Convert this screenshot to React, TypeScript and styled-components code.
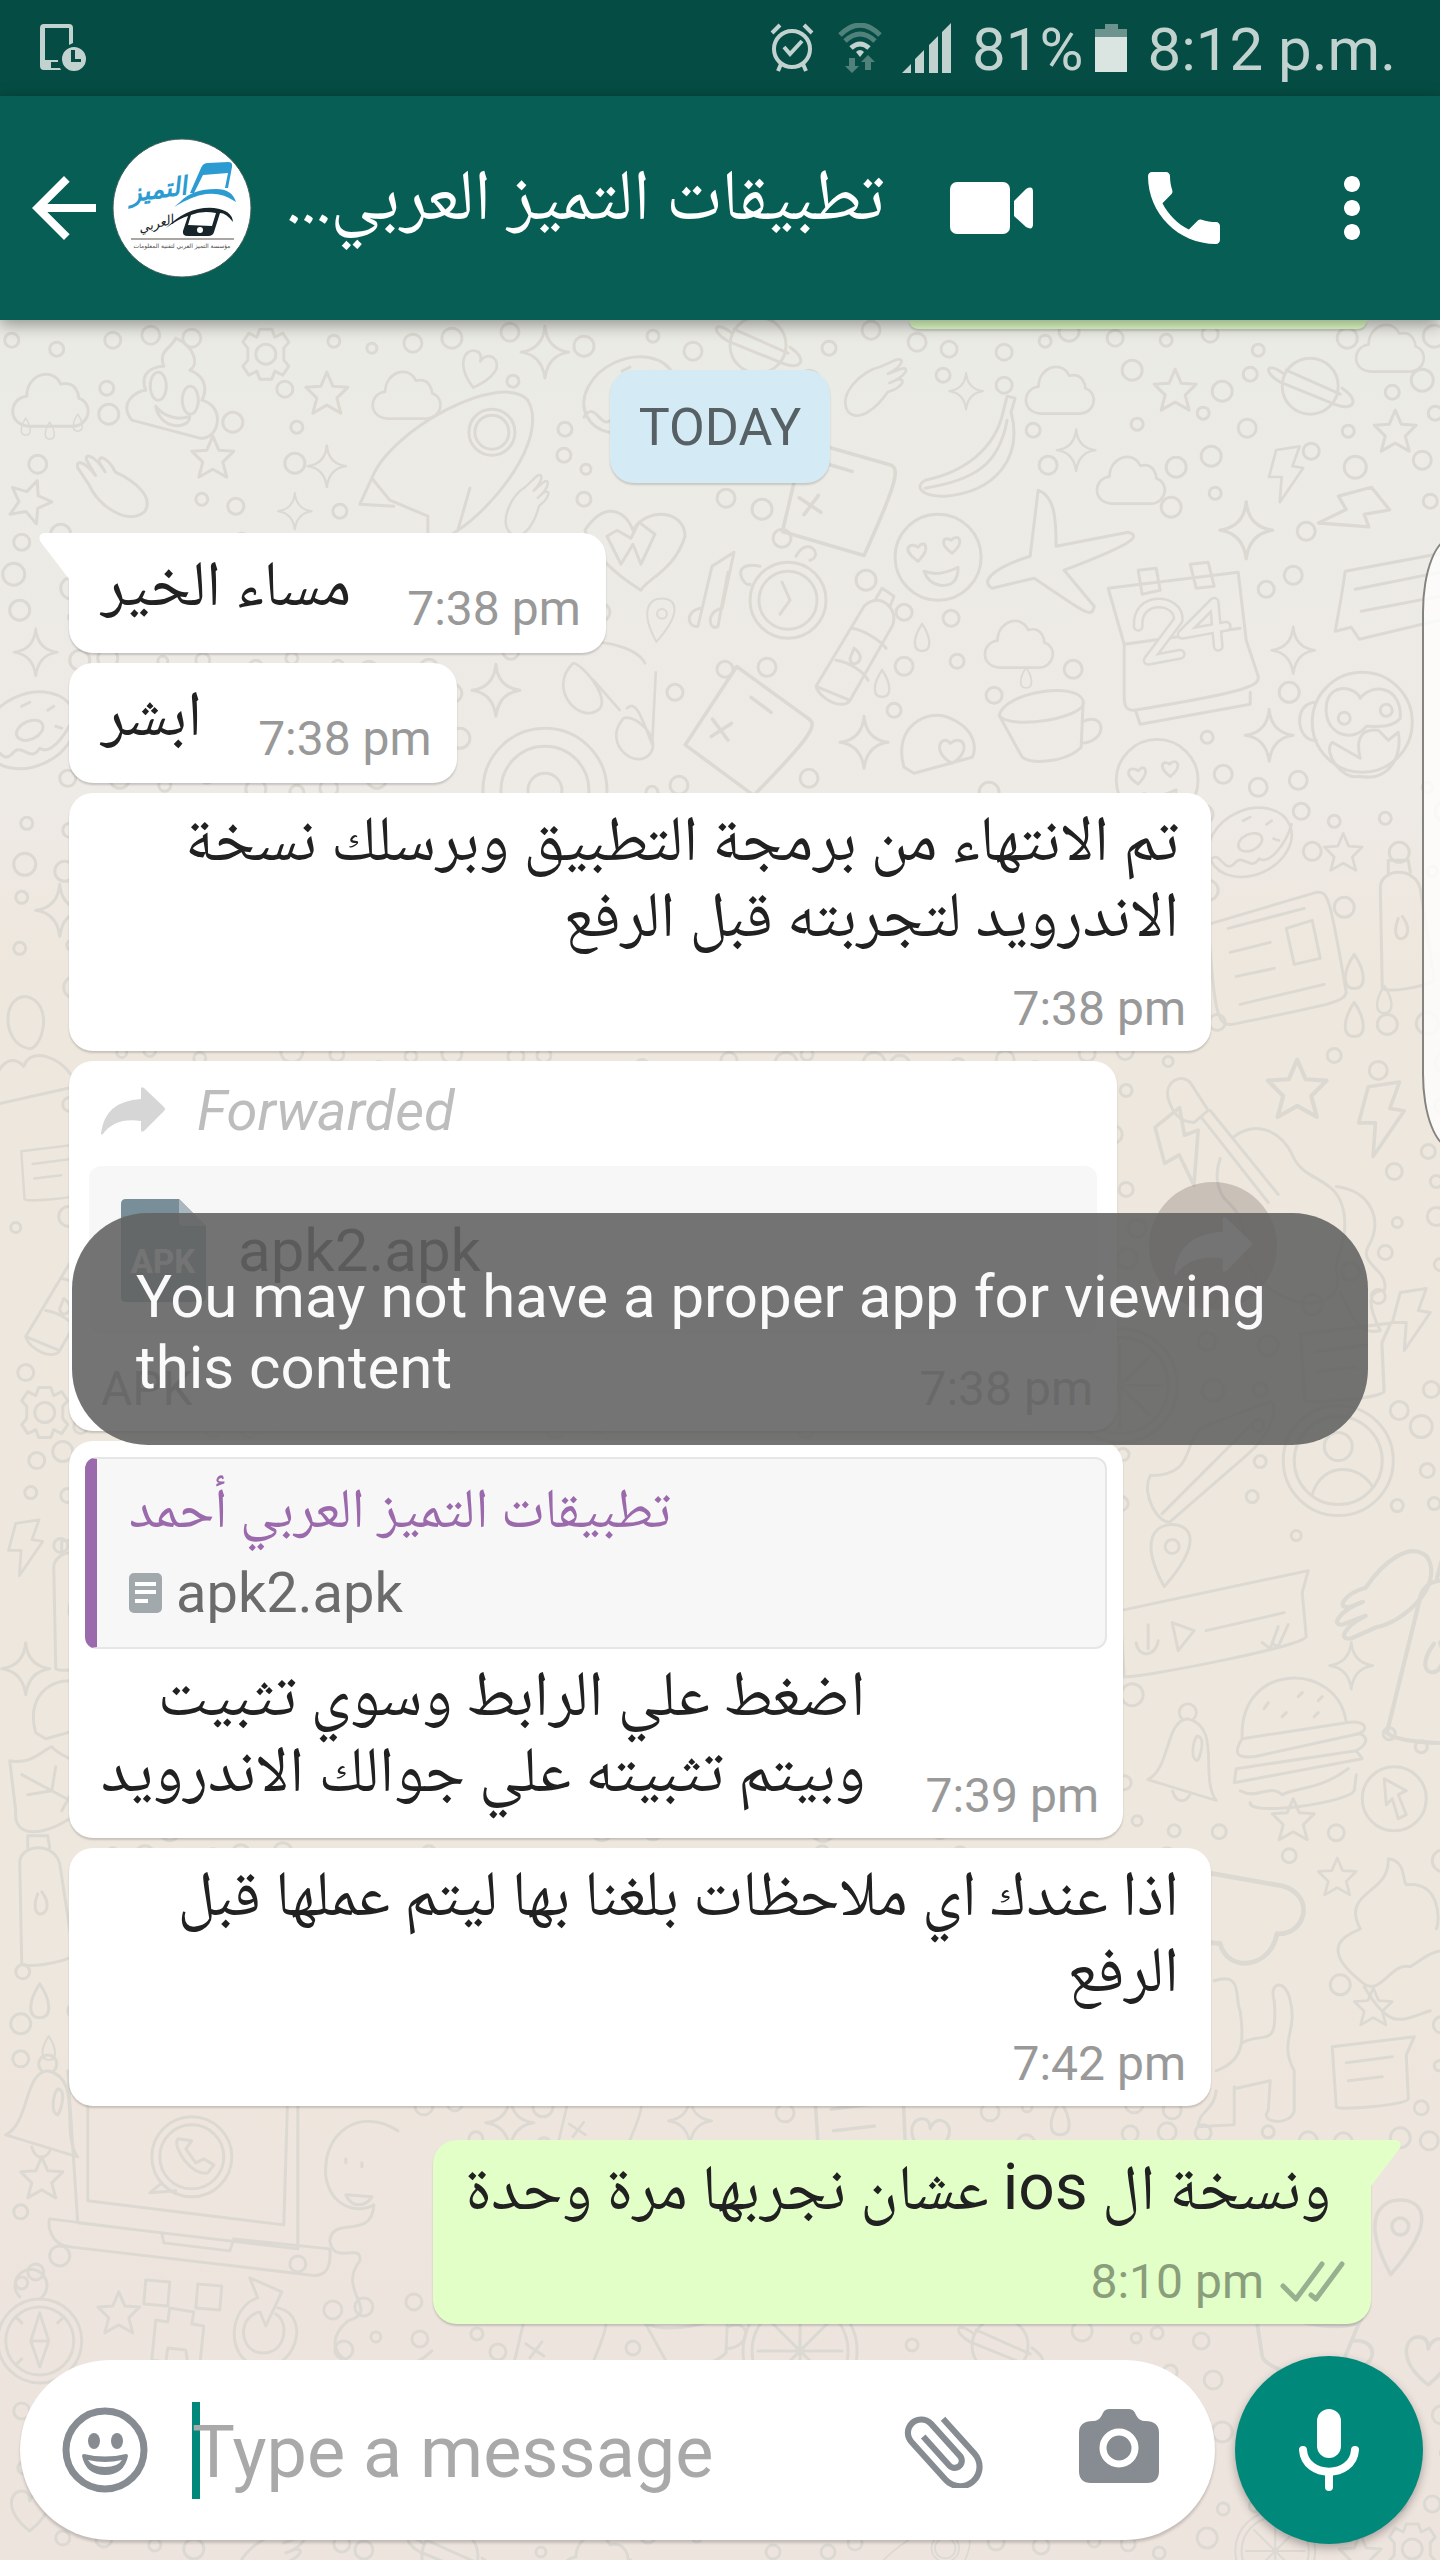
import React from 'react';
import styled, { createGlobalStyle } from 'styled-components';

const latin = `Roboto, "Noto Naskh Arabic", "DejaVu Sans", sans-serif`;
const arabic = `"Noto Naskh Arabic", "Noto Sans Arabic", "DejaVu Sans", sans-serif`;

const GlobalStyle = createGlobalStyle`
  * { box-sizing: border-box; }
  body { margin: 0; background: #eee7de; font-family: ${latin}; }
  button { border: 0; padding: 0; background: none; color: inherit; font: inherit; cursor: pointer; }
  svg { display: block; flex: none; }
  h1, p { margin: 0; font-weight: 400; }
`;

const Screen = styled.div`
  position: relative;
  display: flex;
  flex-direction: column;
  min-height: 100vh;
  overflow: hidden;
  isolation: isolate;
  background: linear-gradient(#ebebe5 14%, #eeeae6 31%, #eee7dd 38%, #eee7dd 78%, #eee4de 90%);
`;

const Wallpaper = styled.svg`
  position: absolute;
  inset: 0;
  width: 100%;
  height: 100%;
  z-index: -1;
  fill: none;
  stroke: #dcd9d3;
  stroke-width: 3;
  stroke-linecap: round;
  stroke-linejoin: round;
`;

const StatusBar = styled.div`
  display: flex;
  align-items: center;
  justify-content: space-between;
  height: 96px;
  padding: 0 44px 0 40px;
  background: #054d44;
  color: #c1d2cf;
  font-size: 60px;
  line-height: 72px;
`;

const StatusGroup = styled.div`
  display: flex;
  align-items: center;
  gap: 20px;
`;

const StatusText = styled.span`
  padding-top: 3px;
`;

const Charge = styled.span`
  display: flex;
  align-items: center;
  gap: 12px;
`;

const AppBar = styled.header`
  display: flex;
  align-items: center;
  height: 224px;
  padding: 0 40px 0 16px;
  background: #075e54;
  color: #fff;
  box-shadow: 0 4px 16px rgba(0, 0, 0, 0.4);
  z-index: 1;
`;

const Title = styled.h1`
  flex: 1;
  padding: 0 48px 8px 34px;
  font-family: ${arabic};
  font-size: 72px;
  line-height: 96px;
  white-space: nowrap;
  text-align: left;
`;

const BarActions = styled.div`
  display: flex;
  align-items: center;
  gap: 72px;
`;

const Chat = styled.main`
  flex: 1;
  display: flex;
  flex-direction: column;
  align-items: flex-start;
  gap: 10px;
  padding: 0 69px 32px;
`;

const PreviousBubble = styled.div`
  align-self: flex-end;
  width: 458px;
  height: 9px;
  margin: 0 4px 0 0;
  border-radius: 0 0 24px 24px;
  background: #e1ffc7;
  box-shadow: 0 2px 2px rgba(0, 0, 0, 0.15);
`;

const DayChip = styled.time`
  align-self: center;
  margin: 31px 0 40px;
  padding: 27px 29px 25px;
  border-radius: 24px;
  background: #d4eaf4;
  box-shadow: 0 2px 2px rgba(0, 0, 0, 0.15);
  color: #566065;
  font-size: 52px;
  line-height: 61px;
`;

const Bubble = styled.article<{ $wide?: boolean; $out?: boolean; $tail?: boolean }>`
  position: relative;
  display: flex;
  flex-direction: ${p => (p.$wide ? 'column' : 'row')};
  align-items: ${p => (p.$wide ? 'flex-end' : 'center')};
  gap: ${p => (p.$wide ? '20px' : '56px')};
  max-width: 1142px;
  min-height: 120px;
  padding: ${p => (p.$wide ? '16px 25px 14px 32px' : '14px 25px 16px 32px')};
  border-radius: 24px;
  background: ${p => (p.$out ? '#e1ffc7' : '#fff')};
  box-shadow: 0 2px 2px rgba(0, 0, 0, 0.17);
  align-self: ${p => (p.$out ? 'flex-end' : 'flex-start')};
  margin-top: ${p => (p.$out ? '24px' : '0')};
  ${p => p.$tail && !p.$out && 'border-top-left-radius: 0;'}
  ${p => p.$tail && p.$out && 'border-top-right-radius: 0;'}
`;

const Tail = styled.svg<{ $out?: boolean }>`
  position: absolute;
  top: 0;
  ${p => (p.$out ? 'left: 100%; fill: #e1ffc7;' : 'right: 100%; fill: #fff; transform: scaleX(-1);')}
`;

const Text = styled.p<{ $inset?: number }>`
  padding-right: ${p => p.$inset ?? 0}px;
  font-family: ${arabic};
  font-size: 64px;
  line-height: 76px;
  color: #212121;
`;

const Latin = styled.span`
  font-family: ${latin};
  line-height: 1;
`;

const Meta = styled.span<{ $out?: boolean }>`
  display: flex;
  align-items: center;
  align-self: flex-end;
  gap: 16px;
  color: ${p => (p.$out ? '#8a9e7c' : '#999')};
  font-size: 48px;
  line-height: 56px;
  white-space: nowrap;
`;

const FileBubble = styled(Bubble)`
  width: 1048px;
  max-width: 100%;
  flex-direction: column;
  align-items: stretch;
  gap: 0;
  padding: 22px 20px 14px;
`;

const Forwarded = styled.p`
  display: flex;
  align-items: center;
  gap: 32px;
  height: 56px;
  margin: 0 12px 27px;
  color: #bdbdbd;
  font-size: 56px;
  line-height: 56px;
  font-style: italic;
`;

const FileCard = styled.button`
  display: flex;
  align-items: center;
  gap: 32px;
  height: 168px;
  padding: 0 32px;
  border-radius: 12px;
  background: #f7f7f7;
  color: #212121;
  font-size: 60px;
`;

const FileFooter = styled.div`
  display: flex;
  justify-content: space-between;
  margin: 27px 4px 0 12px;
  color: #999;
  font-size: 48px;
  line-height: 56px;
`;

const ForwardButton = styled.button`
  position: absolute;
  top: 121px;
  left: calc(100% + 32px);
  width: 128px;
  height: 128px;
  display: grid;
  place-items: center;
  border-radius: 50%;
  background: rgba(90, 75, 70, 0.25);
  color: #fff;
`;

const ReplyBubble = styled(Bubble)`
  width: 1054px;
  max-width: 100%;
  flex-direction: column;
  align-items: stretch;
  padding: 16px 16px 14px;
  gap: 15px;
`;

const Quote = styled.blockquote`
  margin: 0;
  height: 192px;
  padding: 20px 32px 0;
  border: 2px solid #e6e6e6;
  border-left: 12px solid #9b6aac;
  border-radius: 12px;
  background: #f7f7f7;
`;

const QuoteName = styled.p`
  font-family: ${arabic};
  color: #9b6aac;
  font-size: 56px;
  line-height: 72px;
  text-align: left;
`;

const QuoteFile = styled.p`
  display: flex;
  align-items: center;
  gap: 14px;
  color: #6b6b6b;
  font-size: 56px;
  line-height: 84px;
`;

const ReplyBody = styled.div`
  display: flex;
  align-items: flex-end;
  justify-content: space-between;
  padding: 0 8px 0 16px;

  p { padding-bottom: 8px; white-space: nowrap; }
`;

const Toast = styled.div`
  position: absolute;
  left: 5%;
  right: 5%;
  bottom: 1116px;
  padding: 48px 64px 42px;
  border-radius: 76px;
  background: rgba(99, 99, 99, 0.89);
  color: #fafafa;
  font-size: 60px;
  line-height: 71px;
  z-index: 2;
`;

const EdgeHandle = styled.div`
  position: absolute;
  top: 537px;
  right: -42px;
  width: 60px;
  height: 612px;
  border: 2px solid #85837f;
  border-radius: 40px / 100px;
  background: rgba(255, 255, 255, 0.8);
`;

const Composer = styled.footer`
  display: flex;
  align-items: center;
  gap: 20px;
  padding: 0 17px 17px 20px;
`;

const Field = styled.div`
  flex: 1;
  min-width: 0;
  display: flex;
  align-items: center;
  height: 180px;
  padding: 0 56px 0 42px;
  border-radius: 90px;
  background: #fff;
  box-shadow: 0 3px 3px rgba(0, 0, 0, 0.18);
  color: #868c91;
`;

const Caret = styled.span`
  width: 8px;
  height: 97px;
  margin: 0 -8px 0 44px;
  background: #00887a;
`;

const MessageInput = styled.input`
  flex: 1;
  min-width: 0;
  height: 104px;
  padding: 4px 0 0;
  border: 0;
  outline: 0;
  background: none;
  font-family: ${latin};
  font-size: 72px;
  color: #212121;

  &::placeholder { color: #a9a9a9; opacity: 1; }
`;

const FieldActions = styled.div`
  display: flex;
  align-items: center;
  gap: 92px;
`;

const MicButton = styled.button`
  display: grid;
  place-items: center;
  width: 188px;
  height: 188px;
  border-radius: 50%;
  background: #00887a;
  color: #fff;
  box-shadow: 0 4px 10px rgba(0, 0, 0, 0.3);
`;

/* ---------- wallpaper doodles, each drawn around its own origin ---------- */

const doodles: Record<string, React.ReactNode> = {
  star: <path d="M0-22 6-8 21-7 10 4 14 19 0 11-14 19-10 4-21-7-6-8Z" />,
  sparkle: <path d="M0-26Q2-3 24 0 3 3 0 26-3 3-24 0-2-3 0-26Z" />,
  cloud: <path d="M-22 26C-44 24-42-2-24-4-24-26 2-34 10-16 26-20 28-4 28-2 44 4 38 26 22 26Z" />,
  drop: <path d="M0-18C12 0 12 16 0 16S-12 0 0-18Z" />,
  heart: <path d="M0 20C-26 0-20-20-8-20 0-20 0-12 0-10 2-16 8-22 16-16 26-6 12 10 0 20Z" />,
  bolt: <path d="M-10-28 16-32 8-10 20-8-6 30-4 2-18 2Z" />,
  gear: <g><circle r="10" /><path d="M-6-25H6L9-17 17-21 23-12 18-6V6L23 12 17 21 9 17 6 25H-6L-9 17-17 21-23 12-18 6V-6L-23-12-17-21-9-17Z" /></g>,
  face: <g><circle r="43" /><path d="M-20 4C-38-8-28-16-20-10-14-18-6-10-20 4ZM14-4C0-14 6-22 13-17 20-24 28-16 14-4ZM-14 14Q0 20 20 10 20 30 2 28-10 26-14 14Z" /></g>,
  planet: <g><circle r="28" /><path d="M-26-12C-44-26-48-14-30-4L24 18C44 26 50 14 32 2M-24-16 30 8" /></g>,
  banana: <path d="M42-62 50-60 46-46C58 0 30 34-20 38-46 38-50 28-40 22 0 14 30-10 38-46ZM42-38C34 6 10 22-40 30" />,
  hand: <path d="M-30 24C-42 4-14-22 6-26L24-34C34-36 30-26 14-18L30-24C38-26 36-16 16-8L26-12C36-12 28-2 14 2 2 20-18 36-30 24Z" />,
  pin: <g><circle cy="-12" r="7" /><path d="M-8 28C-34-20-16-34 0-34S34-20-8 28Z" /></g>,
  poop: <path d="M-40 20C-54 2-34-10-26-10-34-30-14-34-8-34-14-50 0-52 4-62 22-54 28-36 18-30 42-20 30 0 30 0 54 6 48 40 28 38ZM-16 6C-8 18 10 20 18 16 18 30-12 30-16 6ZM-14-28A8 14 0 1 0-13-28M18-14A8 14 0 1 0 19-14" />,
  donut: <g><ellipse rx="48" ry="36" transform="rotate(-25)" /><ellipse rx="14" ry="9" transform="rotate(-25)" /><path d="M-46 22C-34 4-30 36-18 24-8 10 0 34 10 18 22 26 40 0 46-20M-8-24 0-28M18-20 24-24M26-4 32-2" /></g>,
  ring: <g><circle r="62" /><circle r="44" /><circle r="17" /></g>,
  glasses: <path d="M-30-30C-60 0-20 40 0 20 10 6-20-30-30-30ZM24 34C4 60 40 90 56 70 70 50 30 20 24 34ZM-8-12 22 22M-36-50C-10-60 40-50 50-30M30 20C40 10 46 30 58 60L62-20" />,
  rocket: <g><circle cx="42" cy="-38" r="23" /><circle cx="42" cy="-38" r="17" /><path d="M-78 8C-60-40 50-100 78-70 100-30 40 40 8 60L-22 80-22 46-60 30ZM-78 8-90 34-56 36M8 60 20 18" /></g>,
  plane: <path d="M-10-76C6-70 8-50 8-20L80-34C94-30 84-22 16 4L46 40C44 54 34 44-14 12L-56 22C-70 14-50 0-18-10Z" />,
  calendar: <g><path d="M-66-42 64-58 72 10 84 46C86 56 70 62-40 80-48 80-50 76-50 66V14ZM-50 14 66-2M-38 82-34 94 76 74V62M-36-60-18-62-14-40-32-36ZM16-66 34-68 40-44 22-42Z" /><path d="M-36-4C-38-36 6-32 4-10L-26 30 6 24M44 16 40-28 8 4 52-4" strokeWidth="11" /><path d="M-36-4C-38-36 6-32 4-10L-26 30 6 24M44 16 40-28 8 4 52-4" strokeWidth="6" stroke="#ecebe5" /></g>,
  monkey: <g><circle r="50" /><path d="M-36-10C-38-42-6-36-2-24 10-40 40-36 38-4 30 6 14 4 4 4-8 20-34 14-36-10ZM-30 20C-40 30-20 58-4 54 30 60 40 30 36 10L26 18 16 8C-4 6-6 20-2 36ZM-46-20C-70-20-66 20-46 18" /><circle cx="-18" cy="-4" r="6" /><circle cx="24" cy="-12" r="6" /></g>,
  cup: <path d="M-46-20C-40-44 34-54 38-34 44-18-36-4-46-20L-24 20C-20 30 20 28 36 12L38-34M38-14C60-24 64 6 36 8" />,
  clock: <g><circle r="38" /><circle r="29" /><path d="M-6-18 2 0-8 14M-28-34C-60-40-44-12-38-16M8-44C20-66 36-44 22-40" /></g>,
  bottle: <path d="M-34 36 14-44C30-60 50-40 42-24L0 50ZM-34 36C-30 50-6 60 0 50M2-22C14-20 30-10 36-2M-14 10C0 12 14 22 18 30M26-52 32-62 44-54 40-44M4-2C20 10 0 20 0 8Z" />,
  upright: <path d="M-20-44C-18-62 14-64 20-42L34 50C20 58-12 62-18 58ZM-12-58-12-70 8-70 10-58M2-14C20 10-14 20-2-12" />,
  paper: <path d="M-62-24 46-56C58-58 60-50 76 44 74 54 60 56-38 76-54 78-56 60-62-24ZM-42-20 34-40M-40 4 0-6M-34 28 4 20M-30 56 54 36M16-20 42-28 50 10 24 16Z" />,
  ticket: <path d="M-50-34 90-60M-50-34-54-8-60 26-44 22-36 34 90 4M-40-16 60-36M-34 6 60-12" />,
  guitar: <path d="M-92-82C-96-98-80-108-70-98L-52-70-66-58C-80-58-88-68-92-82ZM-58-62 8 22M-50-70 18 14M-26-44C-4-60 20-50 32-26 44 4 78-6 84 34 88 70 70 76 78 100 76 130 30 130 0 100-30 70 0 50-36 18-46 4-44-10-40-22M76 6C110 10 124 40 108 66 98 84 130 90 124 110 104 110 110 130 120 150 96 156 90 130 80 112" />,
  person: <g><circle r="55" /><circle r="44" /><circle cy="-14" r="14" /><path d="M-26 34C-16 0 22 4 34 26" /></g>,
  shoe: <path d="M-40 20C10 20-10-20 16-30L80-54C90-50 80-20 56 0L-20 66C-30 70-50 40-40 20ZM-28 58 60-30" />,
  voice: <path d="M-100-22 88-62 82-40 86 4C84 14-84 46-96 44ZM-72-8V16M-84 10C-82 26-64 24-62 8M-48-10-42 18-26-2ZM-14-2 64-20M42 10 50 16 58-6M54 12 58 14 68-8" />,
  burger: <path d="M-56-2C-60-80 40-80 48-18ZM-56-2C-70 20-50 16-44 16L56-6C72-8 70-22 48-18M-62 28 58 10C76 0 64-10 56-6M-62 28-64 42 64 18 58 10M-58 50C-40 60-30 42-16 54 0 46 20 50 50 28M-48 62C-50 76 50 62 56 50L58 34M-34-32 -30-38M-16-24-12-28M0-44 4-48M16-24 20-28M20-40 24-44" />,
  bell: <path d="M-34 22C-10 10-16-40 8-42 44-34 20 20 38 44ZM-8 34C-4 48 6 46 10 38M2-42A9 9 0 1 1 14-42M18-24C28-22 20 0 18 2 10 0 14-20 18-24Z" />,
  cursor: <g><circle r="32" /><path d="M-10-20 12-8 4-4 12 16 4 20-2 0-8 6Z" /></g>,
  cupcake: <path d="M-30 60C-80 20-30 10-30 8-50-30 0-26-2-62 16-60 12-40 16-36 50-40 50 0 46 8M-30 60C-10 80 0 40 20 46 30 40 40 30 54 30M-26 66C0 110 10 100 40 90" />,
  dog: <path d="M-50-70C-20-80-30-50-24-40-20-10-20 10-48 20M-22-8C0-20 14 0 10-50 4-70 22-72 26-50 34-20 14-10 30 20V60C26 76-6 72 4 60L6 30-30 38M-48 40C-50 60-66 60-66 76L-30 74V36" />,
  card: <path d="M-38-24 44-34 36-16 38 28C38 34-30 40-34 36ZM-24-8 22-14M-22 10 12 6" />,
  laptop: <path d="M-122-70-112 82 108 108V-50M-102-70V60L94 84 98-50M-140 78 -28 92-26 102 40 110 44 98 140 108C142 134 130 136 120 134L-120 106C-140 104-142 84-140 78Z" />,
  phone: <g><circle r="40" /><circle r="32" /><path d="M-30 26-42 36-16 34M-14-18C-20-10 0 20 16 16L22 8 12 2 4 6-6-8 0-16Z" /></g>,
  compass: <g><circle r="42" /><circle r="34" /><path d="M0-28 9 0 0 26-9 0ZM-9 0H9M-20-44A16 16 0 1 1 0-42M-24-24-18-18M24-24 18-18M-24 24-18 18" /><circle cx="-18" cy="-58" r="6" /></g>,
  creeper: <path d="M-34-36-10-34-12-10-36-12ZM18-32 42-30 40-6 16-8ZM-10-8 14-4 12 8 24 10 20 50 8 48 6 34-12 32-14 46-28 44-24 4-12 6Z" />,
  reload: <path d="M14-18C50-10 30 50-8 40-40 30-34-20-6-28L-14-48 18-34 2 0-4-14C-24-10-26 18-8 26 20 34 28-2 12-12" />,
  ghost: <path d="M26-60C-10-84-50-60-46-14-40 20-10 22 2 14 0 50-40 24-42 50-38 76-10 50-12 70-36 100 10 120-24 130-70 170 20 200 60 160M-26-32V-28M-10-28V-24M-26 4C-20 18-6 16 0 6Z" />,
  leaf: <path d="M-42-30C-20-26-10-40 0-44 10-30 44-30 44 0L30 16C20 34-40 60-36 20ZM30 16-30-16M4-24 0 0-24 4M20 2 10 20" />,
  user: <path d="M-6-46C24-40 10 10-4 6-30 0-30-46-6-46ZM-40 60C-38 20-20 10-8 24 0 0 40 20 44 44L-36 62Z" />,
  dome: <path d="M-34 22C-46-20-10-36 10-28 40-16 38 6 34 12L-24 28ZM14 18C-8 6 4-12 12-2 26-12 34 6 14 18Z" />,
  note: <path d="M-14 16C-30 20-26 36-16 34L-2-26 20-40 8 16C-10 20-4 40 4 34L14-20" />,
  heartW: <path d="M-70 0C-50-30-30-20-22 0-8-24 30-20 30 6 20 40-10 50-14 60-30 50-60 30-70 0ZM-48 6-34 34-22 14-14 34 0 4-16-8-24 8-38 0Z" />,
  citrus: <g><circle r="57" /><circle r="48" /><path d="M0-42V42M-42 0H42M-30-30 30 30M30-30-30 30" /></g>,
  tiles: <path d="M-30-50 40-30C50-28 50-20 20 46L-48 26ZM-34-2-16 10M-30 12-18-4M-10-30 10-24" />,
};

type Placement = [string, number, number, number?, number?];

const placements: Placement[] = [
  ['cloud', 51, 400], ['poop', 172, 400], ['gear', 266, 354], ['star', 327, 394], ['cloud', 407, 395, 0.9],
  ['heart', 478, 370, 0.9, 15], ['sparkle', 545, 352], ['rocket', 450, 470], ['donut', 630, 395],
  ['drop', 26, 427, 0.5], ['drop', 50, 431, 0.5], ['drop', 78, 423, 0.5], ['hand', 116, 486, 1, -100],
  ['star', 213, 458], ['star', 30, 501, 1, 20], ['sparkle', 327, 466, 0.8], ['sparkle', 295, 511, 0.7],
  ['hand', 528, 508, 0.8, -20], ['heartW', 655, 530], ['pin', 662, 622, 0.7], ['note', 714, 592],
  ['sparkle', 36, 652, 0.9], ['sparkle', 496, 690], ['glasses', 600, 690, 0.9], ['ring', 545, 790],
  ['donut', 30, 730], ['planet', 758, 345], ['hand', 875, 390, 0.9], ['sparkle', 966, 391, 0.7],
  ['banana', 965, 458], ['cloud', 1060, 390, 0.9], ['star', 1175, 391], ['planet', 1310, 386],
  ['cloud', 1390, 348, 0.9], ['star', 1395, 432], ['sparkle', 1076, 450, 0.8], ['cloud', 1131, 480, 0.9],
  ['bolt', 1285, 475, 0.9], ['tiles', 840, 500, 1.2], ['face', 938, 557], ['plane', 1048, 566],
  ['sparkle', 1246, 530, 1.1], ['bolt', 1350, 512, 1.1, 60], ['clock', 788, 600], ['bottle', 850, 650],
  ['calendar', 1174, 630], ['ticket', 1395, 605], ['monkey', 1362, 722], ['sparkle', 1293, 650, 0.9],
  ['cloud', 1019, 644, 0.9], ['cup', 1045, 735], ['drop', 1026, 678, 0.6], ['drop', 882, 684, 0.8],
  ['drop', 922, 638, 0.8], ['dome', 938, 745], ['sparkle', 864, 742], ['tiles', 750, 735, 1.2, 20], ['face', 1157, 780, 0.95],
  ['sparkle', 1269, 735], ['donut', 1250, 842, 0.9], ['star', 1343, 853, 0.9], ['paper', 1270, 948],
  ['upright', 1400, 930], ['drop', 1354, 972], ['drop', 1384, 1000, 0.8], ['drop', 1354, 1020], ['star', 1297, 1090, 1.4],
  ['guitar', 1260, 1180], ['bolt', 1380, 1120, 1.2], ['bolt', 1182, 1150, 1.2, -30], ['bolt', 1410, 1320],
  ['card', 1342, 1360, 1.1], ['person', 1338, 1460], ['shoe', 1190, 1455], ['citrus', 1120, 1385],
  ['sparkle', 60, 910], ['user', 32, 1042], ['card', 52, 1170, 0.8], ['gear', 45, 1412],
  ['bottle', 60, 1300], ['bolt', 25, 1548, 0.9], ['upright', 74, 1610], ['sparkle', 26, 1668],
  ['dome', 70, 1710], ['leaf', 52, 1790], ['upright', 40, 1905], ['drop', 40, 2001], ['drop', 49, 2048, 0.7],
  ['bell', 40, 2112], ['pin', 1172, 1558], ['voice', 1220, 1632], ['hand', 1385, 1590, 1.4, 180],
  ['upright', 1432, 1660, 1.4, 15], ['sparkle', 1351, 1665, 0.9], ['burger', 1298, 1740], ['bell', 1180, 1758, 0.95],
  ['cursor', 1394, 1798], ['star', 1293, 1820], ['cloud', 1240, 1920, 1.6, 190], ['star', 1337, 1877, 0.9],
  ['cupcake', 1390, 1920], ['dog', 1264, 2050], ['star', 1373, 2007, 0.9], ['card', 1370, 2070],
  ['laptop', 190, 2140], ['phone', 192, 2156], ['star', 42, 2178], ['ghost', 372, 2190], ['compass', 40, 2340],
  ['creeper', 180, 2315], ['star', 119, 2313], ['reload', 264, 2325], ['citrus', 800, 2350], ['cup', 690, 2340],
  ['planet', 1000, 2345], ['cup', 1300, 2340, 1.3, 20], ['pin', 1400, 2240, 1.2], ['heart', 1428, 2360, 1.2],
  ['sparkle', 510, 2122], ['tiles', 600, 2125, 0.9], ['sparkle', 690, 2120, 0.9], ['card', 860, 2118, 1.2], ['heart', 930, 2138],
  ['drop', 1060, 2118], ['heart', 30, 2510], ['citrus', 1275, 2550, 0.7], ['gear', 1412, 2548], ['star', 1360, 2555],
  ['tiles', 560, 2345], ['planet', 450, 2555], ['cloud', 600, 2560], ['rocket', 920, 2570, 0.6], ['hand', 270, 2560],
];

// How far each doodle reaches from its origin; dots keep clear of it.
const reach: Record<string, number> = {
  sparkle: 32, star: 34, drop: 24, heart: 34, bolt: 38, cloud: 48, gear: 36, rocket: 105, laptop: 150, ghost: 90,
  calendar: 100, plane: 82, voice: 100, burger: 78, guitar: 125, paper: 84, person: 66, ring: 72, citrus: 68,
  monkey: 72, dog: 80, cupcake: 80, glasses: 76, heartW: 66, poop: 64, ticket: 90,
};

// Small bubbles filling the gaps between the doodles, on a jittered grid.
const dots = (() => {
  const out: { x: number; y: number; r: number }[] = [];
  let seed = 11;
  const next = () => (seed = (seed * 16807) % 2147483647) / 2147483647;
  for (let y = 330; y < 2560; y += 40) {
    for (let x = 12; x < 1440; x += 44) {
      const dot = { x: Math.round(x + next() * 26), y: Math.round(y + next() * 22), r: Math.round(5 + next() * 6) };
      const free = placements.every(([name, px, py, s = 1]) => Math.hypot(px - dot.x, py - dot.y) > (reach[name] ?? 56) * s);
      if (free) out.push(dot);
    }
  }
  return out;
})();

const Doodles = () => (
  <Wallpaper viewBox="0 0 1440 2560" preserveAspectRatio="xMidYMin slice" aria-hidden="true">
    {placements.map(([name, x, y, s = 1, r = 0], i) => (
      <g key={i} transform={`translate(${x} ${y}) rotate(${r}) scale(${s})`}>{doodles[name]}</g>
    ))}
    {dots.map((d, i) => <circle key={i} cx={d.x} cy={d.y} r={d.r} />)}
  </Wallpaper>
);

/* ---------- icons ---------- */

const PhoneClockIcon = () => (
  <svg width="48" height="48" viewBox="0 0 48 48" fill="currentColor">
    <path d="M4 0h25a4 4 0 0 1 4 4v15l-4 2V4H5v32h13v2h-7v6h9l1 2H4a4 4 0 0 1-4-4V4a4 4 0 0 1 4-4Z" />
    <path fillRule="evenodd" d="M34 23a12 12 0 1 1 0 24 12 12 0 0 1 0-24Zm-3 3v12h10v-3h-6v-9Z" />
  </svg>
);

const AlarmIcon = () => (
  <svg width="48" height="50" viewBox="0 0 48 50" fill="none" stroke="currentColor" strokeWidth="4">
    <circle cx="22" cy="26" r="18" />
    <path d="M2 10 10 2M42 10 34 2M11 41 8 48M33 41 36 48M14 24 20 31 32 18" />
  </svg>
);

const WifiIcon = () => (
  <svg width="44" height="50" viewBox="0 0 44 50" fill="none" stroke="currentColor" strokeWidth="5">
    <path opacity=".4" d="M2 12Q22-8 42 12M7 18Q22 4 37 18" />
    <path d="M13 25Q22 17 31 25" />
    <path fill="currentColor" stroke="none" d="M18 29Q22 25 26 29L22 34Z" />
    <path fill="currentColor" stroke="none" opacity=".4" d="M11 35h6v8h4l-7 7-7-7h4ZM27 47V39h-4l7-7 7 7h-4v8Z" />
  </svg>
);

const SignalIcon = () => (
  <svg width="50" height="50" viewBox="0 0 50 50" fill="currentColor">
    <path d="M0 50 9 41V50ZM13 50V36L22 27V50ZM27 50V22L36 13V50ZM40 50V9L49 0V50Z" />
  </svg>
);

const BatteryIcon = () => (
  <svg width="32" height="48" viewBox="0 0 32 48">
    <path fill="#6c938d" d="M10 0H23V5H32V14H0V5H10Z" />
    <path fill="#dae5e2" d="M0 13H32V48H0Z" />
  </svg>
);

const MaterialIcon = ({ d, size = 96 }: { d: string; size?: number }) => (
  <svg width={size} height={size} viewBox="0 0 24 24" fill="currentColor"><path d={d} /></svg>
);

const VideoIcon = () => (
  <svg width="120" height="54" viewBox="-6 0 120 54" fill="currentColor">
    <rect y="1" width="60" height="52" rx="7" />
    <path d="M64 20 76 8Q83 4 83 11V43Q83 50 76 46L64 35Z" />
  </svg>
);

const ForwardIcon = ({ width, fill }: { width: number; fill: string }) => (
  <svg width={width} height={(width * 3) / 4} viewBox="0 0 64 48" fill={fill}>
    <path d="M40 2Q40-1 43 1L63 20Q65 22 63 24L43 44Q40 46 40 43V34Q14 30 2 47 0 49 0 46 4 14 40 12Z" />
  </svg>
);

const ApkIcon = () => (
  <svg width="85" height="103" viewBox="0 0 85 103">
    <path fill="#788e98" d="M5 0H58L85 27V98Q85 103 80 103H5Q0 103 0 98V5Q0 0 5 0Z" />
    <path fill="#a9b8be" d="M58 0 85 27H63Q58 27 58 22Z" />
    <text x="42" y="74" textAnchor="middle" fill="#fff" fontFamily="Roboto, sans-serif" fontWeight="700" fontSize="33">APK</text>
  </svg>
);

const DocIcon = () => (
  <svg width="33" height="40" viewBox="0 0 33 40">
    <rect width="33" height="40" rx="5" fill="#a1a9ac" />
    <path stroke="#fff" strokeWidth="4" d="M6 11H27M6 19H27M6 28H19" />
  </svg>
);

const TicksIcon = () => (
  <svg width="66" height="42" viewBox="0 0 66 42" fill="none" stroke="#97b08f" strokeWidth="5" strokeLinecap="round" strokeLinejoin="round">
    <path d="M3 25 16 38 42 3M31 34 36 38 62 3" />
  </svg>
);

const SmileIcon = () => (
  <svg width="86" height="86" viewBox="0 0 86 86" fill="currentColor">
    <circle cx="43" cy="43" r="39" fill="none" stroke="currentColor" strokeWidth="7" />
    <ellipse cx="32" cy="34" rx="6" ry="8" />
    <ellipse cx="55" cy="34" rx="6" ry="8" />
    <path fillRule="evenodd" d="M20 49Q20 47 22 47 43 52 64 47 66 47 66 49 62 68 43 68T20 49ZM26 53Q30 60 43 60T60 53Q43 57 26 53Z" />
  </svg>
);

const ClipIcon = () => (
  <svg width="84" height="76" viewBox="0 0 84 76" fill="currentColor">
    <path transform="translate(42 38) rotate(-42) scale(4.1) translate(-12.5 -12)" d="M16.5 6v11.5c0 2.21-1.79 4-4 4s-4-1.79-4-4V5c0-1.38 1.12-2.5 2.5-2.5s2.5 1.12 2.5 2.5v10.5c0 .55-.45 1-1 1s-1-.45-1-1V6H10v9.5c0 1.38 1.12 2.5 2.5 2.5s2.5-1.12 2.5-2.5V5c0-2.21-1.79-4-4-4S7 2.79 7 5v12.5c0 3.04 2.46 5.5 5.5 5.5s5.5-2.46 5.5-5.5V6h-1.5z" />
  </svg>
);

const CameraIcon = () => (
  <svg width="80" height="82" viewBox="0 0 80 82">
    <path fill="currentColor" d="M30 0H50Q55 0 57 6 60 12 66 12 80 12 80 24V62Q80 74 68 74H12Q0 74 0 62V24Q0 12 14 12 20 12 23 6 25 0 30 0Z" />
    <circle cx="40" cy="39" r="16" fill="none" stroke="#fff" strokeWidth="7" />
  </svg>
);

const MicIcon = () => (
  <svg width="60" height="82" viewBox="0 0 60 82" fill="none" stroke="currentColor" strokeWidth="8" strokeLinecap="round">
    <rect x="18" width="24" height="49" rx="12" fill="currentColor" stroke="none" />
    <path d="M4 41C6 70 54 70 56 41M30 63V78" />
  </svg>
);

const Avatar = () => (
  <svg width="140" height="140" viewBox="0 0 140 140" role="img" aria-label="التميز العربي">
    <circle cx="70" cy="70" r="69" fill="#fff" stroke="#3d5f5a" strokeWidth="1" />
    <g fill="#2c9bd2">
      <path d="M89 30Q91 25 96 25L116 24Q121 24 120 29L116 50H113L116 35 91 37 82 55H78Z" />
      <path d="M68 64Q80 51 104 51 120 51 124 64 110 54 94 56 80 58 62 69Z" />
      <text x="47" y="60" textAnchor="middle" fontFamily='"DejaVu Sans", sans-serif' fontStyle="italic" fontWeight="700" fontSize="25" transform="rotate(-8 47 60)">التميز</text>
    </g>
    <g fill="#17252b">
      <path d="M54 90Q76 68 102 70 120 72 121 84 114 75 108 75L102 94Q101 98 96 98H76Q70 98 71 93L76 78Q68 80 54 90ZM79 77 76 87 100 88 104 75Q90 72 79 77Z" fillRule="evenodd" />
      <text x="45" y="90" textAnchor="middle" fontFamily='"DejaVu Sans", sans-serif' fontStyle="italic" fontSize="13" transform="rotate(-15 45 90)">العربي</text>
    </g>
    <circle cx="88" cy="92" r="3" fill="#fff" />
    <path stroke="#aaa6a2" strokeWidth="2" d="M19 101H122" />
    <text x="70" y="110" textAnchor="middle" fill="#4a4a4a" fontFamily='"DejaVu Sans", sans-serif' fontSize="6">مؤسسة التميز العربي لتقنية المعلومات</text>
  </svg>
);

const BubbleTail = ({ out }: { out?: boolean }) => (
  <Tail $out={out} width="30" height="46" viewBox="0 0 30 46"><path d="M0 0H25Q31 1 29 8L0 46Z" /></Tail>
);

const Incoming = ({ text, time, wide, tail }: { text: string; time: string; wide?: boolean; tail?: boolean }) => (
  <Bubble $wide={wide} $tail={tail}>
    {tail && <BubbleTail />}
    <Text dir="rtl" $inset={wide ? 7 : 0}>{text}</Text>
    <Meta>{time}</Meta>
  </Bubble>
);

export default function App() {
  return (
    <Screen>
      <GlobalStyle />
      <Doodles />

      <StatusBar>
        <PhoneClockIcon />
        <StatusGroup>
          <AlarmIcon />
          <WifiIcon />
          <SignalIcon />
          <Charge><StatusText>81%</StatusText><BatteryIcon /></Charge>
          <StatusText>8:12 p.m.</StatusText>
        </StatusGroup>
      </StatusBar>

      <AppBar>
        <button aria-label="Back"><MaterialIcon d="M20 11H7.83l5.59-5.59L12 4l-8 8 8 8 1.41-1.41L7.83 13H20v-2z" /></button>
        <Avatar />
        <Title dir="rtl">تطبيقات التميز العربي...</Title>
        <BarActions>
          <button aria-label="Video call"><VideoIcon /></button>
          <button aria-label="Call"><MaterialIcon d="M6.62 10.79c1.44 2.83 3.76 5.14 6.59 6.59l2.2-2.2c.27-.27.67-.36 1.02-.24 1.12.37 2.33.57 3.57.57.55 0 1 .45 1 1V20c0 .55-.45 1-1 1-9.39 0-17-7.61-17-17 0-.55.45-1 1-1h3.5c.55 0 1 .45 1 1 0 1.25.2 2.45.57 3.57.11.35.03.74-.25 1.02l-2.2 2.2z" /></button>
          <button aria-label="More options"><MaterialIcon d="M12 8c1.1 0 2-.9 2-2s-.9-2-2-2-2 .9-2 2 .9 2 2 2zm0 2c-1.1 0-2 .9-2 2s.9 2 2 2 2-.9 2-2-.9-2-2-2zm0 6c-1.1 0-2 .9-2 2s.9 2 2 2 2-.9 2-2-.9-2-2-2z" /></button>
        </BarActions>
      </AppBar>

      <Chat>
        <PreviousBubble />
        <DayChip>TODAY</DayChip>

        <Incoming tail text="مساء الخير" time="7:38 pm" />
        <Incoming text="ابشر" time="7:38 pm" />
        <Incoming wide text="تم الانتهاء من برمجة التطبيق وبرسلك نسخة الاندرويد لتجربته قبل الرفع" time="7:38 pm" />

        <FileBubble>
          <Forwarded><ForwardIcon width={64} fill="#d6d6d6" />Forwarded</Forwarded>
          <FileCard><ApkIcon />apk2.apk</FileCard>
          <FileFooter><span>APK</span><span>7:38 pm</span></FileFooter>
          <ForwardButton aria-label="Forward"><ForwardIcon width={78} fill="#fff" /></ForwardButton>
        </FileBubble>

        <ReplyBubble>
          <Quote>
            <QuoteName dir="rtl">تطبيقات التميز العربي أحمد</QuoteName>
            <QuoteFile><DocIcon />apk2.apk</QuoteFile>
          </Quote>
          <ReplyBody>
            <Text dir="rtl">اضغط علي الرابط وسوي تثبيت<br />وبيتم تثبيته علي جوالك الاندرويد</Text>
            <Meta>7:39 pm</Meta>
          </ReplyBody>
        </ReplyBubble>

        <Incoming wide text="اذا عندك اي ملاحظات بلغنا بها ليتم عملها قبل الرفع" time="7:42 pm" />

        <Bubble $wide $out $tail>
          <BubbleTail out />
          <Text dir="rtl" $inset={15}>ونسخة ال <Latin>ios</Latin> عشان نجربها مرة وحدة</Text>
          <Meta $out>8:10 pm<TicksIcon /></Meta>
        </Bubble>
      </Chat>

      <Composer>
        <Field>
          <button aria-label="Emoji"><SmileIcon /></button>
          <Caret />
          <MessageInput aria-label="Message" placeholder="Type a message" />
          <FieldActions>
            <button aria-label="Attach"><ClipIcon /></button>
            <button aria-label="Camera"><CameraIcon /></button>
          </FieldActions>
        </Field>
        <MicButton aria-label="Record voice message"><MicIcon /></MicButton>
      </Composer>

      <EdgeHandle />
      <Toast role="status">You may not have a proper app for viewing this content</Toast>
    </Screen>
  );
}
